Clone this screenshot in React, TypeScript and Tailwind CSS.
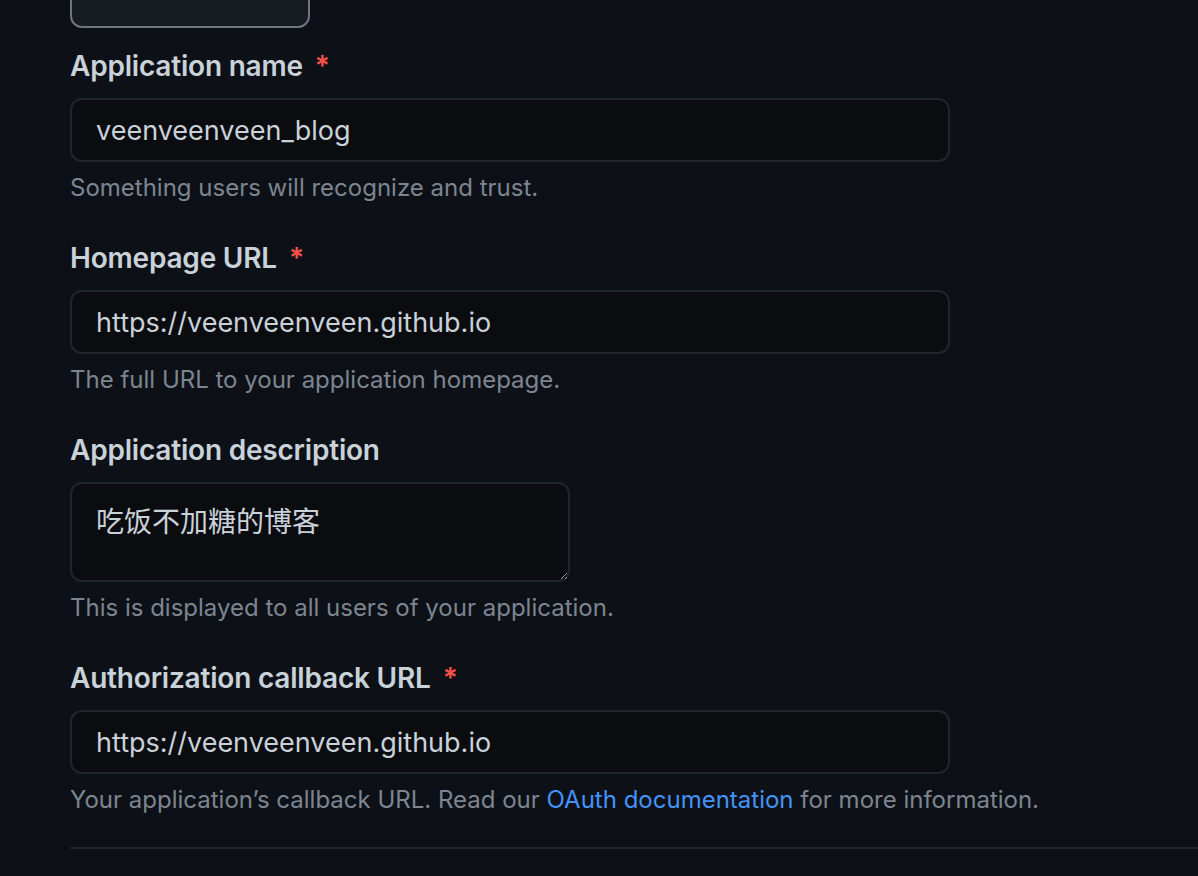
import React from 'react';

interface FieldProps {
  label: string;
  required?: boolean;
  children: React.ReactNode;
  note: React.ReactNode;
}

const Field: React.FC<FieldProps> = ({ label, required, children, note }) => (
  <div className="mt-[32px] first:mt-0">
    <label className="flex items-center h-[40px] text-[28px] font-semibold tracking-[-0.2px] text-[#c9d1d9]">
      {label}
      {required && <span className="ml-[12px] text-[#f85149]">*</span>}
    </label>
    <div className="mt-[12px]">{children}</div>
    <p className="mt-[8px] h-[36px] leading-[36px] text-[24px] text-[#7d8590]">{note}</p>
  </div>
);

const inputCls =
  'w-[880px] h-[64px] px-[24px] rounded-[12px] border-2 border-[#22262c] bg-[#0a0c10] text-[27px] text-[#c9d1d9] outline-none';

export default function App() {
  return (
    <div
      className="w-[1198px] h-[876px] overflow-hidden bg-[#0d1117] pl-[70px]"
      style={{ fontFamily: 'Inter, "Noto Sans", "Noto Sans CJK SC", sans-serif' }}
    >
      {/* bottom of the box above */}
      <div className="-mt-[20px] w-[240px] h-[48px] rounded-[12px] border-2 border-[#6e7681] bg-[#161b22]" />

      <div className="mt-[18px]">
        <Field label="Application name" required note="Something users will recognize and trust.">
          <input className={inputCls} defaultValue="veenveenveen_blog" />
        </Field>

        <Field label="Homepage URL" required note="The full URL to your application homepage.">
          <input className={inputCls} defaultValue="https://veenveenveen.github.io" />
        </Field>

        <Field label="Application description" note="This is displayed to all users of your application.">
          <textarea
            className="block w-[500px] h-[100px] px-[24px] py-[18px] rounded-[12px] border-2 border-[#22262c] bg-[#0a0c10] text-[28px] leading-[40px] text-[#c9d1d9] outline-none resize"
            defaultValue="吃饭不加糖的博客"
          />
        </Field>

        <Field
          label="Authorization callback URL"
          required
          note={
            <>
              Your application’s callback URL. Read our{' '}
              <a href="#" className="text-[#4493f8]">OAuth documentation</a> for more information.
            </>
          }
        >
          <input className={inputCls} defaultValue="https://veenveenveen.github.io" />
        </Field>
      </div>

      <div className="mt-[29px] h-[2px] bg-[#21262d]" />
    </div>
  );
}
